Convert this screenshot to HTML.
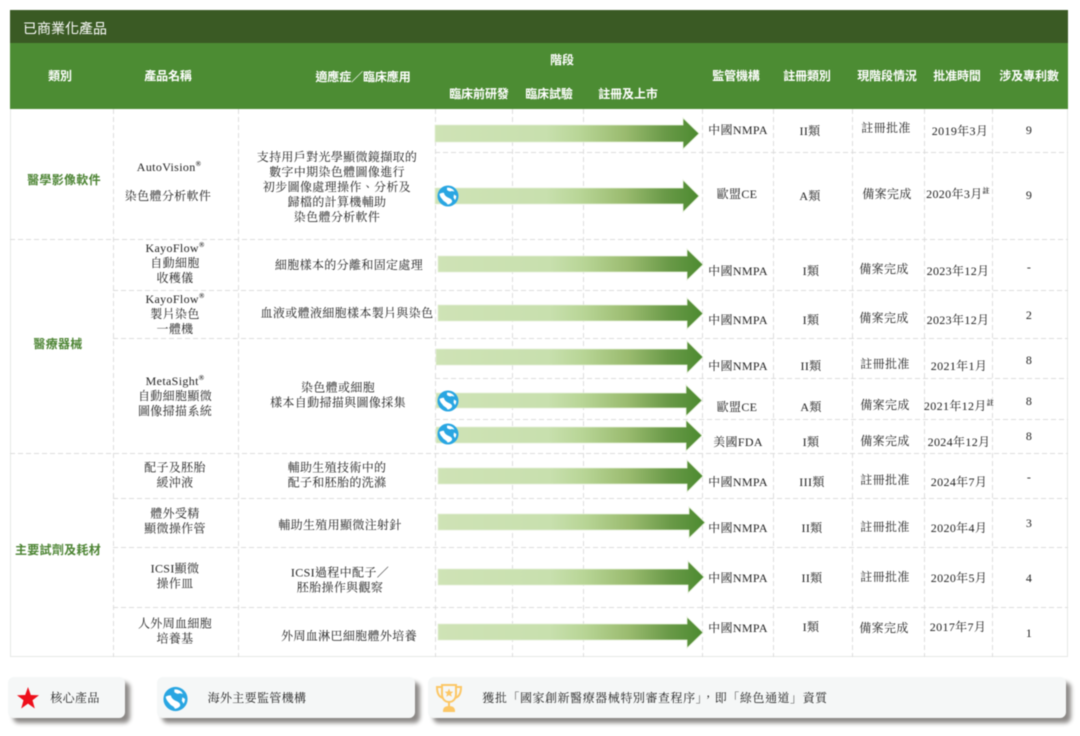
<!DOCTYPE html>
<html><head><meta charset="utf-8">
<style>
html,body{margin:0;padding:0;background:#fff}
#p{position:relative;width:1080px;height:736px;overflow:hidden;background:#fff;font-family:"Liberation Serif","Noto Serif CJK TC","Noto Serif CJK SC",serif;font-size:12px;color:#222;filter:blur(.4px)}
.t{position:absolute;transform:translate(-50%,calc(-50% + 1.5px));white-space:nowrap;text-align:center;line-height:15px;letter-spacing:.35px}
.h{font-family:"Liberation Sans","Noto Sans CJK TC",sans-serif;font-size:12px;font-weight:700;color:#fff;letter-spacing:-.1px}
.c{font-family:"Liberation Sans","Noto Sans CJK TC",sans-serif;font-size:12px;font-weight:700;color:#4c8433;letter-spacing:.3px}
.v,.x{position:absolute}
.v{width:1px;background:repeating-linear-gradient(180deg,#dcdcdc 0 5px,transparent 5px 8px)}
.x{height:1px;background:repeating-linear-gradient(90deg,#dcdcdc 0 5px,transparent 5px 8px)}
.b{position:absolute;top:677px;height:41px;background:#f5f7f7;border-radius:6px;box-shadow:5px 5px 4px #8d8a88}
sup{font-size:7px;line-height:0;font-weight:700}
svg{position:absolute;left:0;top:0}
</style></head><body><div id="p">
<div style="position:absolute;left:10px;top:10px;width:1058px;height:33px;background:#3a5a24"></div>
<div style="position:absolute;left:10px;top:43px;width:1058px;height:66px;background:#4c8c33"></div>
<div style="position:absolute;left:10px;top:109px;width:1058px;height:548px;border:solid #e6e8e6;border-width:0 1px 1px 1px;box-sizing:border-box"></div>
<div class="t" style="left:65px;top:26.500px;color:#fff;font:14px 'Liberation Sans','Noto Sans CJK TC',sans-serif;letter-spacing:0">已商業化產品</div>

<div class="t h" style="left:60px;top:75px">類別</div>
<div class="t h" style="left:168px;top:75px">產品名稱</div>
<div class="t h" style="left:363px;top:76px">適應症／臨床應用</div>
<div class="t h" style="left:562px;top:59px">階段</div>
<div class="t h" style="left:479px;top:92.500px">臨床前研發</div>
<div class="t h" style="left:549px;top:92.500px">臨床試驗</div>
<div class="t h" style="left:628px;top:92.500px">註冊及上市</div>
<div class="t h" style="left:736px;top:75px">監管機構</div>
<div class="t h" style="left:807px;top:75px">註冊類別</div>
<div class="t h" style="left:887px;top:75px">現階段情況</div>
<div class="t h" style="left:957px;top:75px">批准時間</div>
<div class="t h" style="left:1029px;top:75px">涉及專利數</div>

<div class="v" style="left:113px;top:109px;height:548px"></div>
<div class="v" style="left:238px;top:109px;height:548px"></div>
<div class="v" style="left:435px;top:109px;height:548px"></div>
<div class="v" style="left:512px;top:109px;height:548px"></div>
<div class="v" style="left:583px;top:109px;height:548px"></div>
<div class="v" style="left:702px;top:109px;height:548px"></div>
<div class="v" style="left:773px;top:109px;height:548px"></div>
<div class="v" style="left:852px;top:109px;height:548px"></div>
<div class="v" style="left:924px;top:109px;height:548px"></div>
<div class="v" style="left:992px;top:109px;height:548px"></div>

<div class="x" style="left:435px;top:152px;width:633px"></div>
<div class="x" style="left:10px;top:239px;width:1058px"></div>
<div class="x" style="left:113px;top:290px;width:955px"></div>
<div class="x" style="left:113px;top:338px;width:955px"></div>
<div class="x" style="left:435px;top:378px;width:633px"></div>
<div class="x" style="left:435px;top:419px;width:633px"></div>
<div class="x" style="left:10px;top:453px;width:1058px"></div>
<div class="x" style="left:113px;top:498px;width:955px"></div>
<div class="x" style="left:113px;top:547px;width:955px"></div>
<div class="x" style="left:113px;top:607px;width:955px"></div>

<svg width="1080" height="736" viewBox="0 0 1080 736">
<defs>
<linearGradient id="g" x1="0" x2="1" y1="0" y2="0"><stop offset="0" stop-color="#cfe3b6"/><stop offset=".42" stop-color="#c8e0ae"/><stop offset=".55" stop-color="#b8d596"/><stop offset=".72" stop-color="#9abb6f"/><stop offset=".87" stop-color="#6a9a48"/><stop offset="1" stop-color="#4c8a30"/></linearGradient>
<g id="globe"><circle r="10.500" fill="#29a6e2"/><path d="M-8.500-2C-7-3-5-3.500-4-3-3.500-.5-1.500 1 1 2 3 3 4.500 4 4 6 3 7.500 1 8.500-.5 8.500-1.500 6-4 6-5.500 3.500-7 2-8.300 0-8.500-2Z" fill="#fff"/><path d="M-1-8.300C1-8.700 3-8 5-6.500L6.500-4.500 3.500-5C2-4 .5-5-1-6Z" fill="#fff"/><path d="M6-1.500 8.300 0C8.200 1.500 7.800 3 7 4L5.500 1.500Z" fill="#fff"/></g>
</defs>
<g fill="url(#g)" stroke="#e4efd8" stroke-width=".8">
<path d="M435 125H683V118L699 133.500 683 149V142H435Z"/>
<path d="M435 188H683V180L699 196 683 212V204H435Z"/>
<path d="M438 256H687V249L703 264.500 687 280V272H438Z"/>
<path d="M438 305H687V298L703 313.500 687 329V321H438Z"/>
<path d="M436 349H687V341L703 357 687 373V365H436Z"/>
<path d="M436 393H686V385L702 400.500 686 416V408H436Z"/>
<path d="M436 427H686V420L702 435.500 686 451V443H436Z"/>
<path d="M438 468H687V460L703 476 687 492V484H438Z"/>
<path d="M438 514H689V507L705 522.500 689 538V530H438Z"/>
<path d="M438 569H688V561L704 577 688 593V585H438Z"/>
<path d="M438 624H687V617L703 632.500 687 648V640H438Z"/>
</g>
<use href="#globe" transform="translate(448 196)"/>
<use href="#globe" transform="translate(448 401)"/>
<use href="#globe" transform="translate(448 434)"/>
</svg>

<div class="t c" style="left:64px;top:179px">醫學影像軟件</div>
<div class="t c" style="left:58px;top:343px">醫療器械</div>
<div class="t c" style="left:58px;top:549px">主要試劑及耗材</div>

<div class="t" style="left:169px;top:166px">AutoVision<sup>®</sup></div>
<div class="t" style="left:168px;top:195px">染色體分析軟件</div>
<div class="t" style="left:337px;top:186px">支持用戶對光學顯微鏡擷取的<br>數字中期染色體圖像進行<br>初步圖像處理操作、分析及<br>歸檔的計算機輔助<br>染色體分析軟件</div>
<div class="t" style="left:175px;top:262px">KayoFlow<sup>®</sup><br>自動細胞<br>收穫儀</div>
<div class="t" style="left:349px;top:264px">細胞樣本的分離和固定處理</div>
<div class="t" style="left:175px;top:313px">KayoFlow<sup>®</sup><br>製片染色<br>一體機</div>
<div class="t" style="left:347px;top:312px">血液或體液細胞樣本製片與染色</div>
<div class="t" style="left:175px;top:395px">MetaSight<sup>®</sup><br>自動細胞顯微<br>圖像掃描系統</div>
<div class="t" style="left:338px;top:394px">染色體或細胞<br>樣本自動掃描與圖像採集</div>
<div class="t" style="left:175px;top:474px">配子及胚胎<br>緩沖液</div>
<div class="t" style="left:337px;top:474px">輔助生殖技術中的<br>配子和胚胎的洗滌</div>
<div class="t" style="left:175px;top:520px">體外受精<br>顯微操作管</div>
<div class="t" style="left:340px;top:524px">輔助生殖用顯微注射針</div>
<div class="t" style="left:175px;top:575px">ICSI顯微<br>操作皿</div>
<div class="t" style="left:340px;top:579px">ICSI過程中配子／<br>胚胎操作與觀察</div>
<div class="t" style="left:175px;top:630px">人外周血細胞<br>培養基</div>
<div class="t" style="left:349px;top:635px">外周血淋巴細胞體外培養</div>

<div class="t" style="left:738px;top:129px">中國NMPA</div><div class="t" style="left:810px;top:130px">II類</div><div class="t" style="left:886px;top:127px">註冊批准</div><div class="t" style="left:960px;top:130px">2019年3月</div><div class="t" style="left:1029px;top:129px">9</div>
<div class="t" style="left:737px;top:193px">歐盟CE</div><div class="t" style="left:810px;top:195px">A類</div><div class="t" style="left:887px;top:193px">備案完成</div><div class="t" style="left:958px;top:193px">2020年3月<sup>註</sup></div><div class="t" style="left:1029px;top:194px">9</div>
<div class="t" style="left:738px;top:270px">中國NMPA</div><div class="t" style="left:811px;top:270px">I類</div><div class="t" style="left:884px;top:268px">備案完成</div><div class="t" style="left:958px;top:270px">2023年12月</div><div class="t" style="left:1029px;top:266px">-</div>
<div class="t" style="left:738px;top:319px">中國NMPA</div><div class="t" style="left:811px;top:319px">I類</div><div class="t" style="left:884px;top:317px">備案完成</div><div class="t" style="left:958px;top:319px">2023年12月</div><div class="t" style="left:1029px;top:314px">2</div>
<div class="t" style="left:738px;top:365px">中國NMPA</div><div class="t" style="left:811px;top:365px">II類</div><div class="t" style="left:885px;top:363px">註冊批准</div><div class="t" style="left:959px;top:365px">2021年1月</div><div class="t" style="left:1029px;top:359px">8</div>
<div class="t" style="left:737px;top:406px">歐盟CE</div><div class="t" style="left:811px;top:406px">A類</div><div class="t" style="left:885px;top:404px">備案完成</div><div class="t" style="left:959px;top:405px">2021年12月<sup>註</sup></div><div class="t" style="left:1029px;top:400px">8</div>
<div class="t" style="left:738px;top:441px">美國FDA</div><div class="t" style="left:811px;top:441px">I類</div><div class="t" style="left:885px;top:440px">備案完成</div><div class="t" style="left:959px;top:441px">2024年12月</div><div class="t" style="left:1029px;top:435px">8</div>
<div class="t" style="left:738px;top:481px">中國NMPA</div><div class="t" style="left:812px;top:481px">III類</div><div class="t" style="left:885px;top:479px">註冊批准</div><div class="t" style="left:959px;top:481px">2024年7月</div><div class="t" style="left:1029px;top:476px">-</div>
<div class="t" style="left:738px;top:527px">中國NMPA</div><div class="t" style="left:812px;top:527px">II類</div><div class="t" style="left:885px;top:526px">註冊批准</div><div class="t" style="left:959px;top:527px">2020年4月</div><div class="t" style="left:1029px;top:522px">3</div>
<div class="t" style="left:738px;top:577px">中國NMPA</div><div class="t" style="left:812px;top:577px">II類</div><div class="t" style="left:885px;top:576px">註冊批准</div><div class="t" style="left:959px;top:577px">2020年5月</div><div class="t" style="left:1029px;top:577px">4</div>
<div class="t" style="left:738px;top:627px">中國NMPA</div><div class="t" style="left:811px;top:626px">I類</div><div class="t" style="left:884px;top:627px">備案完成</div><div class="t" style="left:958px;top:626px">2017年7月</div><div class="t" style="left:1029px;top:632px">1</div>

<div class="b" style="left:8px;width:117px"></div>
<div class="b" style="left:157px;width:258px"></div>
<div class="b" style="left:428px;width:638px"></div>
<div class="t" style="left:75px;top:696.500px">核心產品</div>
<div class="t" style="left:257px;top:696.500px">海外主要監管機構</div>
<div class="t" style="left:655px;top:696.500px;letter-spacing:.55px">獲批「國家創新醫療器械特別審查程序」，即「綠色通道」資質</div>
<svg width="1080" height="736" viewBox="0 0 1080 736">
<path d="M28 687 30.800 695 39 695.200 32.500 700.200 34.800 708.500 28 703.600 21.200 708.500 23.500 700.200 17 695.200 25.200 695Z" fill="#ee0f1b"/>
<use href="#globe" transform="translate(175.500 699) scale(1.15)"/>
<g fill="none" stroke="#fcc766" stroke-width="2">
<path d="M442 685H456V694C456 699 453 702 449 702 445 702 442 699 442 694Z"/>
<path d="M442 687H437C437 693 439 697 443 698M456 687H461C461 693 459 697 455 698"/>
<path d="M449 702V707"/>
<path d="M444 711C444 708 446 707 449 707 452 707 454 708 454 711Z" fill="#fcc766"/>
</g>
<path d="M449 688.500 450.200 691.500 453.300 691.700 451 693.700 451.700 696.800 449 695.100 446.300 696.800 447 693.700 444.700 691.700 447.800 691.500Z" fill="#fcc766"/>
</svg>
</div></body></html>
